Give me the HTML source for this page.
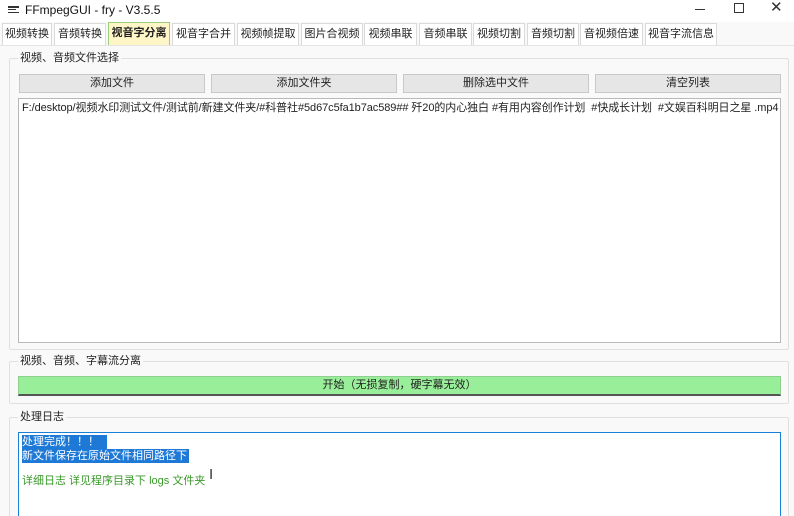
<!DOCTYPE html>
<html><head><meta charset="utf-8"><style>
*{margin:0;padding:0;box-sizing:border-box}
html,body{width:794px;height:516px;overflow:hidden}
body{background:#f9f9f9;font-family:"Liberation Sans","Noto Sans CJK SC",sans-serif;font-size:11px;color:#000;position:relative}
.a{position:absolute}
.title{left:0;top:0;width:794px;height:22px;background:#fff}
.tab{position:absolute;top:23px;height:22px;border:1px solid #dadada;border-bottom:none;background:#fff;text-align:center;line-height:20px;color:#222;white-space:nowrap}
.sel{background:#fff6c8;border-color:#9ccc7c;font-weight:bold;top:22px;height:24px}
.grp{position:absolute;left:9px;width:780px;border:1px solid #e0e0e0;border-radius:2px}
.gt{position:absolute;left:8px;top:-9px;background:#f9f9f9;padding:0 2px;line-height:16px;color:#222}
.btn{position:absolute;top:74px;height:19px;background:#e6e6e6;border:1px solid #c8c8c8;text-align:center;line-height:17px;color:#222}
</style></head><body>
<div class="a title"></div>
<div class="a" style="left:8px;top:6px;width:11px;height:2px;background:#333"></div>
<div class="a" style="left:8px;top:9px;width:8px;height:1px;background:#333"></div>
<div class="a" style="left:8px;top:12px;width:11px;height:1px;background:#333"></div>
<div class="a" style="left:25px;top:1px;line-height:18px;font-size:12px;color:#111">FFmpegGUI - fry - V3.5.5</div>
<div class="a" style="left:695px;top:9px;width:10px;height:1px;background:#333"></div>
<div class="a" style="left:734px;top:3px;width:10px;height:10px;border:1px solid #333"></div>
<div class="a" style="left:770px;top:0px;font-size:15px;line-height:16px;color:#333">✕</div>

<div class="tab" style="left:2px;width:50px">视频转换</div>
<div class="tab" style="left:54px;width:52px">音频转换</div>
<div class="tab sel" style="left:108px;width:62px">视音字分离</div>
<div class="tab" style="left:172px;width:63px">视音字合并</div>
<div class="tab" style="left:237px;width:62px">视频帧提取</div>
<div class="tab" style="left:301px;width:62px">图片合视频</div>
<div class="tab" style="left:364px;width:53px">视频串联</div>
<div class="tab" style="left:419px;width:53px">音频串联</div>
<div class="tab" style="left:473px;width:52px">视频切割</div>
<div class="tab" style="left:527px;width:52px">音频切割</div>
<div class="tab" style="left:580px;width:63px">音视频倍速</div>
<div class="tab" style="left:645px;width:72px">视音字流信息</div>
<div class="a" style="left:0;top:45px;width:794px;height:1px;background:#e4e4e4"></div>

<div class="grp" style="top:58px;height:292px"><div class="gt">视频、音频文件选择</div></div>
<div class="btn" style="left:19px;width:186px">添加文件</div>
<div class="btn" style="left:211px;width:186px">添加文件夹</div>
<div class="btn" style="left:403px;width:186px">删除选中文件</div>
<div class="btn" style="left:595px;width:186px">清空列表</div>
<div class="a" style="left:18px;top:98px;width:763px;height:245px;background:#fff;border:1px solid #b8b8b8;padding:1px 3px;line-height:17px;white-space:nowrap;overflow:hidden;color:#222;letter-spacing:-0.08px">F:/desktop/视频水印测试文件/测试前/新建文件夹/#科普社#5d67c5fa1b7ac589## 歼20的内心独白 #有用内容创作计划 &nbsp;#快成长计划 &nbsp;#文娱百科明日之星 .mp4</div>

<div class="grp" style="top:361px;height:43px"><div class="gt">视频、音频、字幕流分离</div></div>
<div class="a" style="left:18px;top:376px;width:763px;height:20px;background:#99ee99;border:1px solid #8fcf8f;border-bottom:2px solid #555;text-align:center;line-height:17px;color:#222">开始（无损复制，硬字幕无效）</div>

<div class="grp" style="top:417px;height:110px"><div class="gt">处理日志</div></div>
<div class="a" style="left:18px;top:432px;width:763px;height:90px;background:#fff;border:1px solid #1a7fd7"></div>
<div class="a" style="left:22px;top:435px;line-height:14px;background:#1e78d6;color:#fff;padding-right:8px">处理完成！！！</div>
<div class="a" style="left:22px;top:449px;line-height:14px;background:#1e78d6;color:#fff;padding-right:2px">新文件保存在原始文件相同路径下</div>
<div class="a" style="left:22px;top:474px;line-height:15px;color:#3a9a2a">详细日志 详见程序目录下 logs 文件夹</div>
<div class="a" style="left:209px;top:466px;font-size:15px;color:#333">I</div>
</body></html>
